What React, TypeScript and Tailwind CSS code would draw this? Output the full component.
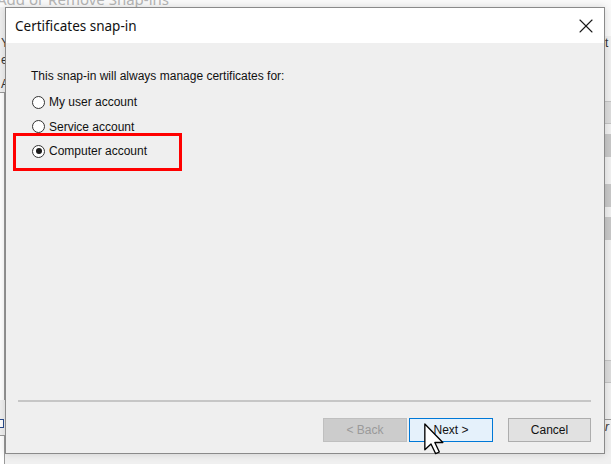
import { X } from 'lucide-react';

const options = [
  { id: 'user', label: 'My user account' },
  { id: 'service', label: 'Service account' },
  { id: 'computer', label: 'Computer account' },
];

function Radio({ checked }: { checked: boolean }) {
  return (
    <span className="w-[13px] h-[13px] rounded-full border border-[#333333] bg-white flex items-center justify-center shrink-0">
      {checked && <span className="w-[6px] h-[6px] rounded-full bg-[#1a1a1a]" />}
    </span>
  );
}

function Cursor() {
  return (
    <svg width="20" height="32" viewBox="0 0 12 19" className="absolute left-[424px] top-[423px]">
      <path d="M0.5 0.5 L0.5 16 L4.2 12.5 L7 18.3 L9.2 17.3 L6.5 11.6 L11.3 11.6 Z" fill="#ffffff" stroke="#000000" strokeWidth="0.8" strokeLinejoin="round" />
    </svg>
  );
}

export default function App() {
  const selected = 'computer';

  return (
    <div className="relative w-[611px] h-[464px] overflow-hidden bg-[#f0f0f0] font-['Liberation_Sans',Arial,sans-serif]">
      {/* Background window: Add or Remove Snap-ins */}
      <div className="h-[7px] bg-[#fafafa] overflow-hidden">
        <div className="-mt-[11px] -ml-[3px] text-[15px] leading-[20px] text-[#b5b5b5] font-['Noto_Sans',sans-serif]">Add or Remove Snap-ins</div>
      </div>
      <div className="flex h-[457px]">
        <div className="w-[5px] flex flex-col text-[12px] text-[#333] leading-[14px]">
          <div className="h-[29px]" />
          <div className="pl-[1px]">Y</div>
          <div className="pl-[1px] mt-[3px]">e</div>
          <div className="pl-[1px] mt-[10px]">A</div>
          <div className="mt-[1px] h-[308px] bg-white border-r border-t border-[#9a9a9a]" />
          <div className="mt-[19px] h-[9px] w-[4px] border border-[#2b4c8c] border-l-0 bg-white" />
          <div className="mt-[7px] flex-1 bg-white border-r border-t border-[#9a9a9a]" />
        </div>
        <div className="flex-1" />
        <div className="w-[7px] flex flex-col text-[12px] leading-[14px] text-[#333]">
          <div className="h-[29px] bg-[#fafafa]" />
          <div className="pl-[1px]">t</div>
          <div className="h-[51px]" />
          <div className="h-[23px] bg-[#dcdcdc] border-y border-[#c4c4c4]" />
          <div className="h-[10px]" />
          <div className="h-[23px] bg-[#c8c8c8]" />
          <div className="h-[27px]" />
          <div className="h-[23px] bg-[#c8c8c8]" />
          <div className="h-[10px]" />
          <div className="h-[23px] bg-[#c8c8c8]" />
          <div className="h-[120px]" />
          <div className="h-[23px] bg-[#dcdcdc] border-y border-[#c4c4c4]" />
          <div className="h-[37px] border-b border-[#9a9a9a]" />
          <div className="pl-[1px] italic">r</div>
        </div>
      </div>

      {/* Certificates snap-in dialog */}
      <div className="absolute left-[5px] top-[7px] w-[600px] h-[447px] border border-[#8a8a8a] bg-[#efefef] flex flex-col shadow-[0_0_8px_rgba(0,0,0,0.15)]">
        <div className="h-[35px] bg-white flex items-center justify-between pl-[9px] pr-[6px] shrink-0">
          <span className="text-[13.5px] text-[#111] font-['Noto_Sans','Open_Sans',sans-serif] pt-[1px]">Certificates snap-in</span>
          <X className="w-[24px] h-[24px] text-[#1a1a1a]" strokeWidth={1.1} />
        </div>

        <div className="flex-1 flex flex-col">
          <div className="pl-[25px] pt-[26px] text-[12px] leading-[14px] text-[#111]">
            This snap-in will always manage certificates for:
          </div>
          <div className="pl-[26px] pt-[7px] flex flex-col">
            {options.map((o) => (
              <div key={o.id} className="h-[24.5px] flex items-center gap-[4px] text-[12px] text-[#111]">
                <Radio checked={o.id === selected} />
                <span>{o.label}</span>
              </div>
            ))}
          </div>
          <div className="flex-1" />
          <div className="ml-[12px] mr-[13px] h-[2px] bg-[#c6c6c6]" />
          <div className="flex justify-end pr-[13px] pt-[16px] pb-[11px] text-[12px]">
            <button className="w-[84px] h-[24px] bg-[#cccccc] border border-[#bfbfbf] text-[#9a9a9a]">&lt; Back</button>
            <button className="ml-[2px] w-[84px] h-[24px] bg-[#e5f1fb] border border-[#0078d7] text-[#111]">Next &gt;</button>
            <button className="ml-[15px] w-[83px] h-[24px] bg-[#e1e1e1] border border-[#adadad] text-[#111]">Cancel</button>
          </div>
        </div>

        {/* annotation */}
        <div className="absolute left-[7px] top-[125px] w-[169px] h-[38px] border-[3px] border-[#ff0000]" />
      </div>

      <Cursor />
    </div>
  );
}
